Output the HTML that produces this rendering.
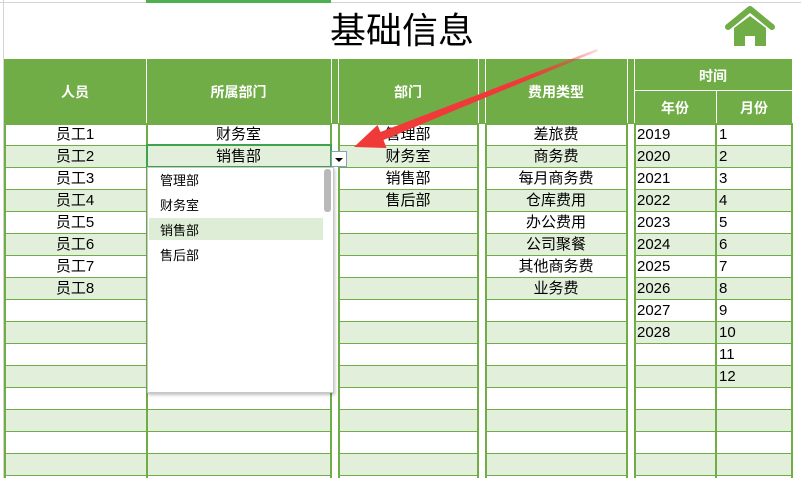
<!DOCTYPE html>
<html><head><meta charset="utf-8"><style>
*{margin:0;padding:0;box-sizing:border-box}
body{width:801px;height:478px;overflow:hidden;background:#fff;position:relative;font-family:"Liberation Sans","Noto Sans CJK SC",sans-serif;}
.a{position:absolute}
.hl{position:absolute;height:1px;background:#70ad47}
.vl{position:absolute;width:2px;background:#70ad47;top:123px;height:355px}
.row{position:absolute;left:4px;width:788px;height:22px}
.t{position:absolute;font-size:15px;color:#000;line-height:22px;text-align:center;padding-top:1px}
.h{position:absolute;color:#fff;font-weight:bold;font-size:14px;text-align:center}
.dd{position:absolute;font-size:13px;left:160px}
</style></head><body>
<div class="a" style="left:0;top:2px;width:801px;height:1px;background:#d4d4d4"></div>
<div class="a" style="left:3px;top:0;width:1px;height:478px;background:#d4d4d4"></div>
<div class="a" style="left:146px;top:0;width:185px;height:3px;background:#4caf50"></div>
<div class="a" style="left:330px;top:6px;font-size:36px;line-height:50px;color:#000">基础信息</div>
<svg class="a" style="left:724px;top:6px" width="52" height="42" viewBox="0 0 52 42">
<path d="M4 21 L26 3 L48 21" fill="none" stroke="#70ad47" stroke-width="6" stroke-linecap="round" stroke-linejoin="round"/>
<path d="M10 22 L26 10 L42 22 L42 40 L31 40 L31 30 L21 30 L21 40 L10 40 Z" fill="#70ad47"/>
</svg>
<div class="a" style="left:4px;top:59px;width:788px;height:64px;background:#70ad47"></div>
<div class="a" style="left:146px;top:59px;width:1px;height:64px;background:#fff"></div>
<div class="a" style="left:331px;top:59px;width:1px;height:64px;background:#fff"></div>
<div class="a" style="left:338px;top:59px;width:1px;height:64px;background:#fff"></div>
<div class="a" style="left:478px;top:59px;width:1px;height:64px;background:#fff"></div>
<div class="a" style="left:485px;top:59px;width:1px;height:64px;background:#fff"></div>
<div class="a" style="left:627px;top:59px;width:1px;height:64px;background:#fff"></div>
<div class="a" style="left:634px;top:59px;width:1px;height:64px;background:#fff"></div>
<div class="a" style="left:634px;top:90px;width:158px;height:1px;background:#fff"></div>
<div class="a" style="left:716px;top:91px;width:1px;height:32px;background:#fff"></div>
<div class="h" style="left:4px;width:142px;top:82px">人员</div>
<div class="h" style="left:146px;width:185px;top:82px">所属部门</div>
<div class="h" style="left:338px;width:140px;top:82px">部门</div>
<div class="h" style="left:485px;width:142px;top:82px">费用类型</div>
<div class="h" style="left:634px;width:158px;top:66px">时间</div>
<div class="h" style="left:634px;width:82px;top:98px">年份</div>
<div class="h" style="left:716px;width:76px;top:98px">月份</div>
<div class="row" style="top:145px;background:#e2efda"></div>
<div class="row" style="top:189px;background:#e2efda"></div>
<div class="row" style="top:233px;background:#e2efda"></div>
<div class="row" style="top:277px;background:#e2efda"></div>
<div class="row" style="top:321px;background:#e2efda"></div>
<div class="row" style="top:365px;background:#e2efda"></div>
<div class="row" style="top:409px;background:#e2efda"></div>
<div class="row" style="top:453px;background:#e2efda"></div>
<div class="hl" style="left:4px;width:788px;top:123px;height:2px"></div>
<div class="hl" style="left:4px;width:788px;top:145px"></div>
<div class="hl" style="left:4px;width:788px;top:167px"></div>
<div class="hl" style="left:4px;width:788px;top:189px"></div>
<div class="hl" style="left:4px;width:788px;top:211px"></div>
<div class="hl" style="left:4px;width:788px;top:233px"></div>
<div class="hl" style="left:4px;width:788px;top:255px"></div>
<div class="hl" style="left:4px;width:788px;top:277px"></div>
<div class="hl" style="left:4px;width:788px;top:299px"></div>
<div class="hl" style="left:4px;width:788px;top:321px"></div>
<div class="hl" style="left:4px;width:788px;top:343px"></div>
<div class="hl" style="left:4px;width:788px;top:365px"></div>
<div class="hl" style="left:4px;width:788px;top:387px"></div>
<div class="hl" style="left:4px;width:788px;top:409px"></div>
<div class="hl" style="left:4px;width:788px;top:431px"></div>
<div class="hl" style="left:4px;width:788px;top:453px"></div>
<div class="hl" style="left:4px;width:788px;top:475px"></div>
<div class="a" style="left:332px;top:124px;width:6px;height:354px;background:#fff"></div>
<div class="a" style="left:479px;top:124px;width:6px;height:354px;background:#fff"></div>
<div class="a" style="left:628px;top:124px;width:6px;height:354px;background:#fff"></div>
<div class="vl" style="left:4px"></div>
<div class="vl" style="left:146px"></div>
<div class="vl" style="left:330px"></div>
<div class="vl" style="left:338px"></div>
<div class="vl" style="left:477px"></div>
<div class="vl" style="left:485px"></div>
<div class="vl" style="left:626px"></div>
<div class="vl" style="left:634px"></div>
<div class="vl" style="left:715px"></div>
<div class="vl" style="left:791px"></div>
<div class="t" style="left:4px;width:142px;top:123px">员工1</div>
<div class="t" style="left:4px;width:142px;top:145px">员工2</div>
<div class="t" style="left:4px;width:142px;top:167px">员工3</div>
<div class="t" style="left:4px;width:142px;top:189px">员工4</div>
<div class="t" style="left:4px;width:142px;top:211px">员工5</div>
<div class="t" style="left:4px;width:142px;top:233px">员工6</div>
<div class="t" style="left:4px;width:142px;top:255px">员工7</div>
<div class="t" style="left:4px;width:142px;top:277px">员工8</div>
<div class="t" style="left:146px;width:185px;top:123px">财务室</div>
<div class="a" style="left:146px;top:144px;width:186px;height:24px;border:2px solid #3fa34d"></div>
<div class="t" style="left:146px;width:185px;top:145px">销售部</div>
<div class="t" style="left:338px;width:140px;top:123px">管理部</div>
<div class="t" style="left:338px;width:140px;top:145px">财务室</div>
<div class="t" style="left:338px;width:140px;top:167px">销售部</div>
<div class="t" style="left:338px;width:140px;top:189px">售后部</div>
<div class="t" style="left:485px;width:142px;top:123px">差旅费</div>
<div class="t" style="left:485px;width:142px;top:145px">商务费</div>
<div class="t" style="left:485px;width:142px;top:167px">每月商务费</div>
<div class="t" style="left:485px;width:142px;top:189px">仓库费用</div>
<div class="t" style="left:485px;width:142px;top:211px">办公费用</div>
<div class="t" style="left:485px;width:142px;top:233px">公司聚餐</div>
<div class="t" style="left:485px;width:142px;top:255px">其他商务费</div>
<div class="t" style="left:485px;width:142px;top:277px">业务费</div>
<div class="t" style="left:637px;top:123px">2019</div>
<div class="t" style="left:637px;top:145px">2020</div>
<div class="t" style="left:637px;top:167px">2021</div>
<div class="t" style="left:637px;top:189px">2022</div>
<div class="t" style="left:637px;top:211px">2023</div>
<div class="t" style="left:637px;top:233px">2024</div>
<div class="t" style="left:637px;top:255px">2025</div>
<div class="t" style="left:637px;top:277px">2026</div>
<div class="t" style="left:637px;top:299px">2027</div>
<div class="t" style="left:637px;top:321px">2028</div>
<div class="t" style="left:719px;top:123px">1</div>
<div class="t" style="left:719px;top:145px">2</div>
<div class="t" style="left:719px;top:167px">3</div>
<div class="t" style="left:719px;top:189px">4</div>
<div class="t" style="left:719px;top:211px">5</div>
<div class="t" style="left:719px;top:233px">6</div>
<div class="t" style="left:719px;top:255px">7</div>
<div class="t" style="left:719px;top:277px">8</div>
<div class="t" style="left:719px;top:299px">9</div>
<div class="t" style="left:719px;top:321px">10</div>
<div class="t" style="left:719px;top:343px">11</div>
<div class="t" style="left:719px;top:365px">12</div>
<div class="a" style="left:331px;top:151px;width:16px;height:16px;background:#fff;border:1px solid #8aa0b8"></div>
<div class="a" style="left:335px;top:158px;width:0;height:0;border-left:4px solid transparent;border-right:4px solid transparent;border-top:4px solid #000"></div>
<div class="a" style="left:147px;top:167px;width:187px;height:226px;background:#fff;border:1px solid #c8c8c8;box-shadow:1px 2px 3px rgba(0,0,0,0.25)"></div>
<div class="a" style="left:149px;top:218px;width:174px;height:22px;background:#deedd6"></div>
<div class="a" style="left:324px;top:169px;width:7px;height:43px;background:#b9b9b9;border-radius:3px"></div>
<div class="dd" style="top:170px">管理部</div>
<div class="dd" style="top:195px">财务室</div>
<div class="dd" style="top:220px">销售部</div>
<div class="dd" style="top:245px">售后部</div>
<svg class="a" style="left:0;top:0" width="801" height="478">
<defs><linearGradient id="g" x1="597" y1="50" x2="380" y2="136" gradientUnits="userSpaceOnUse"><stop offset="0" stop-color="#f04040" stop-opacity="0.2"/><stop offset="0.3" stop-color="#f03a3a"/><stop offset="1" stop-color="#f03a3a"/></linearGradient></defs>
<polygon points="597,49 598,51 383.5,140 386.5,148 354,147 377.5,125 380.5,132" fill="url(#g)"/>
</svg>
</body></html>
